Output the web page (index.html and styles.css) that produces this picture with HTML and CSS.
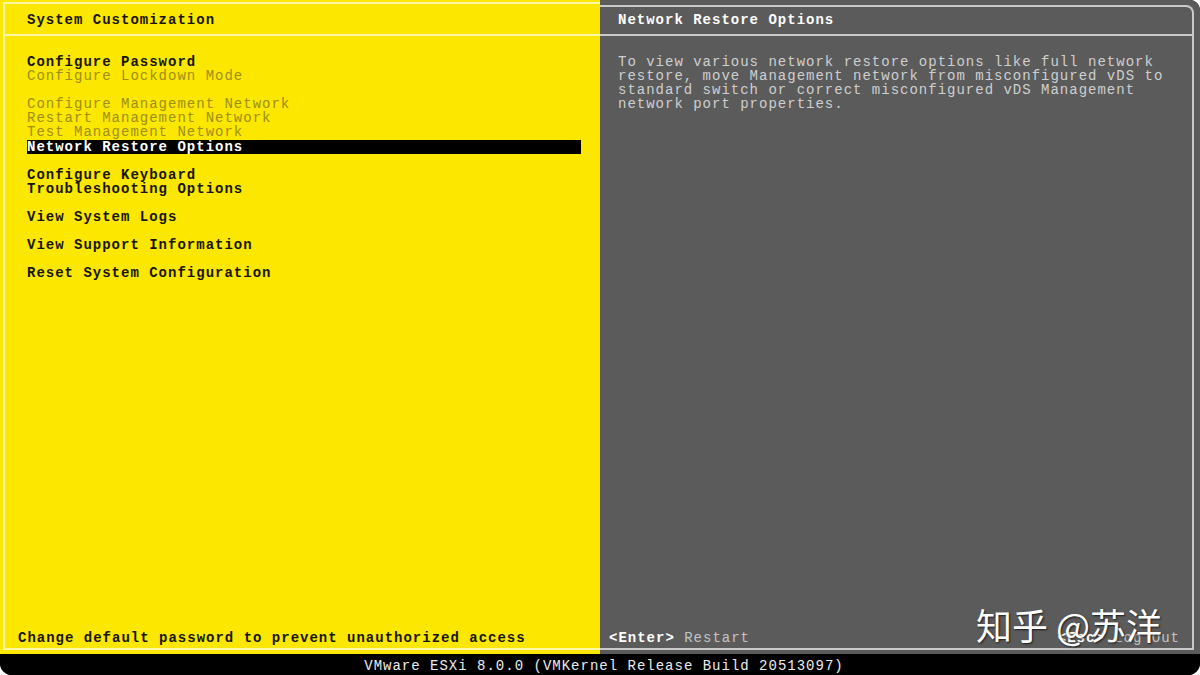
FILE: index.html
```html
<!DOCTYPE html>
<html lang="en">
<head>
    <meta charset="UTF-8">
    <meta name="viewport" content="width=device-width, initial-scale=1.0">
    <title>System Customization</title>
    <link rel="stylesheet" href="styles.css">
</head>
<body>
    <div class="screen">
        <div class="panes">
            <!-- left: yellow menu -->
            <section class="pane pane-menu">
                <div class="frame">
                    <header class="pane-title">System Customization</header>
                    <ul class="menu">
                        <li class="item">Configure Password</li>
                        <li class="item dim">Configure Lockdown Mode</li>
                        <li class="gap"></li>
                        <li class="item dim">Configure Management Network</li>
                        <li class="item dim">Restart Management Network</li>
                        <li class="item dim">Test Management Network</li>
                        <li class="item selected">Network Restore Options</li>
                        <li class="gap"></li>
                        <li class="item">Configure Keyboard</li>
                        <li class="item">Troubleshooting Options</li>
                        <li class="gap"></li>
                        <li class="item">View System Logs</li>
                        <li class="gap"></li>
                        <li class="item">View Support Information</li>
                        <li class="gap"></li>
                        <li class="item">Reset System Configuration</li>
                    </ul>
                    <footer class="pane-foot">Change default password to prevent unauthorized access</footer>
                </div>
            </section>

            <!-- right: grey details -->
            <section class="pane pane-info">
                <div class="frame">
                    <header class="pane-title">Network Restore Options</header>
                    <p class="info-text">To view various network restore options like full network<br>restore, move Management network from misconfigured vDS to<br>standard switch or correct misconfigured vDS Management<br>network port properties.</p>
                    <footer class="pane-foot">
                        <span><b class="key">&lt;Enter&gt;</b> Restart</span>
                        <span><b class="key">&lt;Esc&gt;</b> Log Out</span>
                    </footer>
                </div>
            </section>
        </div>

        <div class="status">VMware ESXi 8.0.0 (VMKernel Release Build 20513097)</div>

        <div class="watermark">知乎 @苏洋</div>
    </div>
</body>
</html>
```

FILE: styles.css
```css
/* DCUI console look */
body {
    margin: 0;
    padding: 0;
    background-color: #ffffff;
    font-family: "Liberation Mono", "DejaVu Sans Mono", monospace;
    font-size: 14px;
    letter-spacing: 1px;
    line-height: 14.1px;
}

.screen {
    position: relative;
    width: 1200px;
    height: 675px;
    display: flex;
    flex-direction: column;
    border-radius: 0 10px 12px 12px;
    overflow: hidden;
    background-color: #000;
}

.panes {
    display: flex;
    height: 657px;
}

.pane {
    display: flex;
    box-sizing: border-box;
}

.frame {
    flex: 1;
    display: flex;
    flex-direction: column;
    box-sizing: border-box;
}

.pane-title {
    box-sizing: border-box;
    font-weight: bold;
    border-bottom: 2px solid;
}

.pane-foot {
    margin-top: auto;
    padding-bottom: 3px;
    font-weight: bold;
}

/* yellow menu side */
.pane-menu {
    width: 600px;
    background-color: #fbe700;
    color: #171500;
    padding: 2px 0 4px 3px;
}

.pane-menu .frame {
    border: 2px solid #fff6a6;
    border-right: none;
}

.pane-menu .pane-title {
    height: 32px;
    padding: 9px 0 0 22px;
    border-bottom-color: #fff6a6;
}

.menu {
    list-style: none;
    margin: 0;
    padding: 19px 19px 0 22px;
}

.item {
    height: 14.1px;
    font-weight: bold;
    white-space: pre;
}

.item.dim {
    color: #a08e1a;
    font-weight: normal;
}

.item.selected {
    background-color: #000;
    color: #ffffff;
}

.gap {
    height: 14.1px;
}

.pane-menu .pane-foot {
    padding-left: 13px;
}

/* grey info side */
.pane-info {
    flex: 1;
    background-color: #5b5b5b;
    color: #cfcfcf;
    padding: 5px 6px 4px 0;
}

.pane-info .frame {
    border: 2px solid #c9c9c9;
    border-left: none;
    border-radius: 0 8px 0 0;
}

.pane-info .pane-title {
    height: 29px;
    padding: 6px 0 0 18px;
    color: #ffffff;
    border-bottom-color: #c9c9c9;
}

.info-text {
    margin: 0;
    padding: 19px 0 0 18px;
}

.pane-info .pane-foot {
    display: flex;
    justify-content: space-between;
    padding-left: 9px;
    padding-right: 12px;
    font-weight: normal;
    color: #c4c4c4;
}

.key {
    color: #ffffff;
}

/* bottom status line */
.status {
    height: 18px;
    line-height: 18px;
    padding: 3px 0 0 8px;
    text-align: center;
    color: #ececec;
    background-color: #000;
}

.watermark {
    position: absolute;
    left: 976px;
    top: 600px;
    font-family: "Noto Sans CJK SC", sans-serif;
    font-size: 36px;
    letter-spacing: 0;
    line-height: 48px;
    color: #ffffff;
    text-shadow: 1px 1px 2px rgba(0, 0, 0, 0.7);
}
```
